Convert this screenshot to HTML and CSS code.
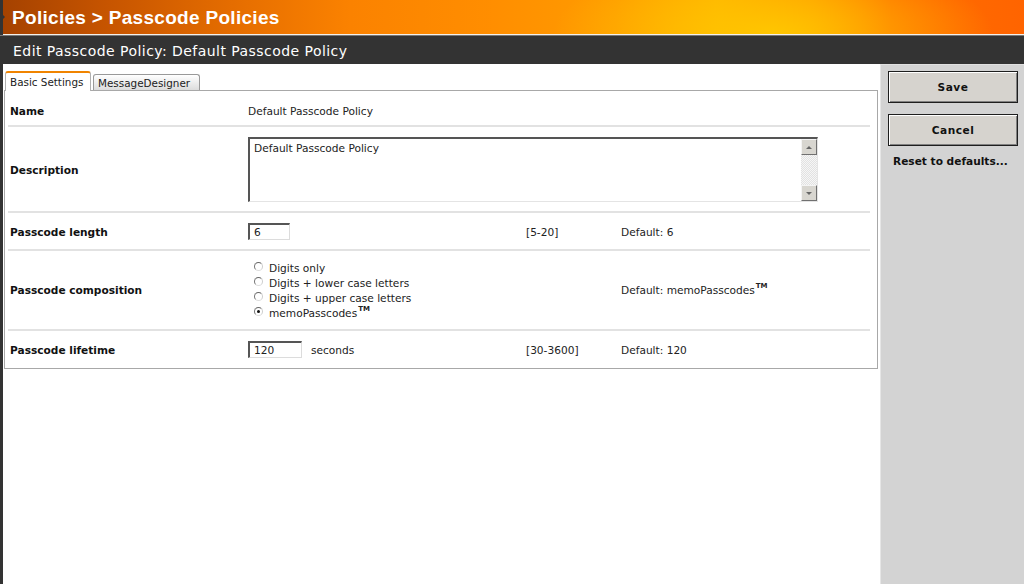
FILE: index.html
```html
<!DOCTYPE html>
<html>
<head>
<meta charset="utf-8">
<title>Edit Passcode Policy</title>
<link rel="stylesheet" href="styles.css">
</head>
<body>
<div class="app">
  <header class="topbar">
    <span class="arrow"></span>
    <span class="crumbs">Policies &gt; Passcode Policies</span>
  </header>
  <div class="titlebar">Edit Passcode Policy: Default Passcode Policy</div>
  <div class="main">
    <div class="content">
      <div class="tabs">
        <div class="tab active">Basic Settings</div>
        <div class="tab">MessageDesigner</div>
      </div>
      <div class="form">
        <div class="row r-name">
          <div class="label">Name</div>
          <div class="val">Default Passcode Policy</div>
        </div>
        <div class="row r-desc">
          <div class="label">Description</div>
          <div class="val span3">
            <div class="textarea">
              <div class="ta-text">Default Passcode Policy</div>
              <div class="scrollbar">
                <div class="sb-btn"><span class="tri up"></span></div>
                <div class="sb-track"></div>
                <div class="sb-btn"><span class="tri down"></span></div>
              </div>
            </div>
          </div>
        </div>
        <div class="row r-len">
          <div class="label">Passcode length</div>
          <div class="val"><div class="input w42">6</div></div>
          <div class="range">[5-20]</div>
          <div class="def">Default: 6</div>
        </div>
        <div class="row r-comp">
          <div class="label">Passcode composition</div>
          <div class="val">
            <div class="radios">
              <div class="opt"><span class="radio"></span><span>Digits only</span></div>
              <div class="opt"><span class="radio"></span><span>Digits + lower case letters</span></div>
              <div class="opt"><span class="radio"></span><span>Digits + upper case letters</span></div>
              <div class="opt"><span class="radio checked"></span><span>memoPasscodes<sup>TM</sup></span></div>
            </div>
          </div>
          <div class="range"></div>
          <div class="def">Default: memoPasscodes<sup>TM</sup></div>
        </div>
        <div class="row r-life">
          <div class="label">Passcode lifetime</div>
          <div class="val"><div class="input w54">120</div><span class="unit">seconds</span></div>
          <div class="range">[30-3600]</div>
          <div class="def">Default: 120</div>
        </div>
      </div>
    </div>
    <aside class="side">
      <div class="btn">Save</div>
      <div class="btn">Cancel</div>
      <div class="reset">Reset to defaults...</div>
    </aside>
  </div>
</div>
</body>
</html>
```
FILE: styles.css
```css
html, body {
  margin: 0;
  padding: 0;
}
body {
  font-family: "DejaVu Sans", Verdana, sans-serif;
  font-size: 10.6px;
  color: #111;
  background: #333;
}
.app {
  width: 1024px;
  height: 584px;
  box-sizing: border-box;
  padding-left: 3px;
  display: flex;
  flex-direction: column;
  background: #333;
  position: relative;
  overflow: hidden;
}
.topbar {
  height: 34px;
  flex: none;
  display: flex;
  align-items: center;
  padding-left: 9px;
  border-bottom: 1px solid #f4f0ea;
  background:
    radial-gradient(ellipse 220px 80px at 770px 34px, rgba(255,200,0,0.95), rgba(255,190,0,0) 100%),
    linear-gradient(90deg, #a54200 0%, #c65400 10%, #e46c00 22%, #fb8200 34%, #ff8e00 48%, #ff9c00 60%, #ffb000 70%, #ff9400 79%, #ff6e00 87%, #ff6400 100%);
}
.arrow {
  position: absolute;
  left: 0;
  top: 12px;
  width: 0;
  height: 0;
  border-top: 5px solid transparent;
  border-bottom: 5px solid transparent;
  border-left: 5px solid #333;
}
.crumbs {
  font-family: "Liberation Sans", Arial, sans-serif;
  font-weight: bold;
  font-size: 19px;
  color: #fff;
  letter-spacing: 0.3px;
  margin-top: 2px;
}
.titlebar {
  height: 29px;
  box-sizing: border-box;
  flex: none;
  border-top: 1px solid #777;
  background: #333;
  color: #fff;
  font-size: 14px;
  letter-spacing: 0.45px;
  display: flex;
  align-items: center;
  margin-left: -3px;
  padding-left: 13px;
  padding-top: 1px;
}
.main {
  flex: 1;
  display: flex;
  min-height: 0;
}
.content {
  flex: 1;
  background: #fff;
  display: flex;
  flex-direction: column;
}
.tabs {
  display: flex;
  align-items: flex-end;
  gap: 2px;
  padding-left: 2px;
  margin-top: 8px;
  height: 18px;
  position: relative;
  z-index: 2;
}
.tab {
  height: 15px;
  padding: 0 4px;
  display: flex;
  align-items: center;
  border: 1px solid #999;
  border-bottom: none;
  border-radius: 3px 3px 0 0;
  background: linear-gradient(#ffffff, #dcdcdc);
  color: #222;
  font-size: 10.4px;
}
.tab.active {
  height: 17px;
  border-top: 2px solid #f08400;
  border-left-color: #b0b0b0;
  border-right-color: #b0b0b0;
  background: #fff;
  margin-bottom: -1px;
  padding: 0 4px 1px;
  width: 76px;
}
.tab:not(.active) {
  width: 97px;
}
.form {
  margin: 0 2px 0 1px;
  border: 1px solid #a8a8a8;
  padding: 0 7px 0 3px;
  position: relative;
  z-index: 1;
}
.row {
  display: grid;
  grid-template-columns: 240px 278px 95px 1fr;
  align-items: center;
  border-bottom: 2px solid #e2e2e2;
  box-sizing: border-box;
}
.row:last-child {
  border-bottom: none;
}
.r-name { height: 36px; padding-top: 5px; }
.r-desc { height: 86px; padding-top: 1px; }
.r-len { height: 38px; padding-top: 1px; }
.r-comp { height: 80px; }
.r-life { height: 37px; }
.label {
  font-weight: bold;
  padding-left: 2px;
  color: #111;
}
.val, .range, .def {
  color: #222;
}
.span3 {
  grid-column: 2 / span 3;
}
.textarea {
  width: 570px;
  height: 65px;
  box-sizing: border-box;
  border-top: 2px solid #555;
  border-left: 2px solid #555;
  border-right: 1px solid #e4e4e4;
  border-bottom: 1px solid #e4e4e4;
  display: flex;
  background: #fff;
}
.ta-text {
  flex: 1;
  padding: 3px 0 0 4px;
}
.scrollbar {
  width: 16px;
  display: flex;
  flex-direction: column;
}
.sb-btn {
  height: 16px;
  box-sizing: border-box;
  background: #d8d6d0;
  border: 1px solid;
  border-color: #f4f4f4 #707070 #707070 #f4f4f4;
  display: flex;
  align-items: center;
  justify-content: center;
}
.sb-track {
  flex: 1;
  background-color: #f2f2f2;
  background-image: repeating-conic-gradient(#e2e2e2 0 25%, #f6f6f6 0 50%);
  background-size: 2px 2px;
}
.tri {
  width: 0;
  height: 0;
  border-left: 3px solid transparent;
  border-right: 3px solid transparent;
}
.tri.up { border-bottom: 3px solid #666; }
.tri.down { border-top: 3px solid #666; }
.input {
  display: inline-block;
  height: 17px;
  box-sizing: border-box;
  border-top: 2px solid #555;
  border-left: 2px solid #555;
  border-right: 1px solid #dcdcdc;
  border-bottom: 1px solid #dcdcdc;
  padding-left: 4px;
  line-height: 14px;
  vertical-align: middle;
  background: #fff;
}
.w42 { width: 42px; }
.w54 { width: 54px; }
.unit {
  margin-left: 9px;
  vertical-align: middle;
}
.radios {
  padding-left: 6px;
  margin-top: 1px;
}
.opt {
  height: 15px;
  line-height: 15px;
  display: flex;
  align-items: center;
}
.radio {
  width: 9px;
  height: 9px;
  box-sizing: border-box;
  border-radius: 50%;
  border: 1px solid;
  border-color: #666 #ccc #ddd #777;
  background: #fff;
  margin-right: 6px;
  margin-top: -3px;
  position: relative;
  flex: none;
}
.radio.checked::after {
  content: "";
  position: absolute;
  left: 2px;
  top: 2px;
  width: 3px;
  height: 3px;
  border-radius: 50%;
  background: #111;
}
sup {
  font-size: 7px;
  font-weight: bold;
  line-height: 0;
  vertical-align: 6px;
  margin-left: 1px;
}
.side {
  width: 136px;
  flex: none;
  background: #d3d3d3;
  border-left: 1px solid #e6e6e6;
  border-top: 1px solid #e0e0e0;
  padding: 6px 0 0 7px;
  display: flex;
  flex-direction: column;
}
.btn {
  width: 130px;
  height: 32px;
  box-sizing: border-box;
  background: #d6d3ce;
  border: 1px solid #1e1e1e;
  box-shadow: inset 1px 1px 0 #ffffff, inset -1px -1px 0 #808080;
  display: flex;
  align-items: center;
  justify-content: center;
  font-weight: bold;
  font-size: 10.6px;
  letter-spacing: 0.5px;
  color: #111;
  margin-bottom: 11px;
}
.reset {
  font-weight: bold;
  font-size: 10.6px;
  padding-left: 5px;
  margin-top: -2px;
  color: #111;
}
```
